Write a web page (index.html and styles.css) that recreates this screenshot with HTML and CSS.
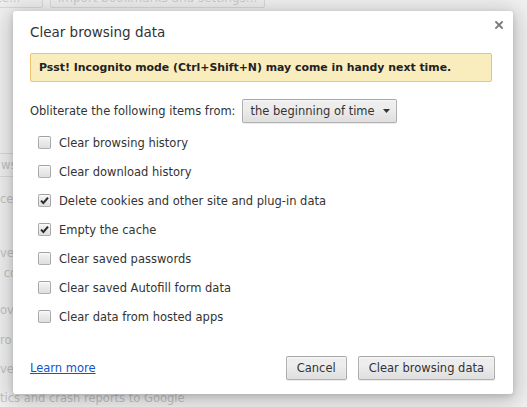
FILE: index.html
```html
<!DOCTYPE html>
<html>
<head>
<meta charset="utf-8">
<link rel="stylesheet" href="styles.css">
</head>
<body>
<div class="page">
  <div class="bg">
    <div class="bg-buttons">
      <span class="bg-btn bg-btn-a">Delete...</span>
      <span class="bg-btn bg-btn-b">Import bookmarks and settings...</span>
    </div>
    <div class="bg-box">wsi</div>
    <div class="bg-line bg-l1">ces</div>
    <div class="bg-line bg-l2">ve</div>
    <div class="bg-line bg-l3">&nbsp;co</div>
    <div class="bg-line bg-l4">ov</div>
    <div class="bg-line bg-l5">ro</div>
    <div class="bg-line bg-l6">ve</div>
    <div class="bg-line bg-l7">tics and crash reports to Google</div>
  </div>
  <div class="overlay">
    <div class="dialog">
      <svg class="close" width="8" height="8" viewBox="0 0 8 8"><path d="M1 1L7 7M7 1L1 7" stroke="#7a7a7a" stroke-width="1.9" stroke-linecap="square"/></svg>
      <h1 class="title">Clear browsing data</h1>
      <div class="banner">Psst! Incognito mode (Ctrl+Shift+N) may come in handy next time.</div>
      <div class="obliterate">
        <span>Obliterate the following items from:</span>
        <span class="select"><span>the beginning of time</span><svg width="7" height="4" viewBox="0 0 7 4"><path d="M0 0H7L3.5 4Z" fill="#333"/></svg></span>
      </div>
      <div class="list">
        <div class="row"><span class="cb"></span><span>Clear browsing history</span></div>
        <div class="row"><span class="cb"></span><span>Clear download history</span></div>
        <div class="row"><span class="cb"><svg width="11" height="11" viewBox="0 0 11 11"><path d="M2 5.6L4.4 8L9 2.6" fill="none" stroke="#2b2b2b" stroke-width="2"/></svg></span><span>Delete cookies and other site and plug-in data</span></div>
        <div class="row"><span class="cb"><svg width="11" height="11" viewBox="0 0 11 11"><path d="M2 5.6L4.4 8L9 2.6" fill="none" stroke="#2b2b2b" stroke-width="2"/></svg></span><span>Empty the cache</span></div>
        <div class="row"><span class="cb"></span><span>Clear saved passwords</span></div>
        <div class="row"><span class="cb"></span><span>Clear saved Autofill form data</span></div>
        <div class="row"><span class="cb"></span><span>Clear data from hosted apps</span></div>
      </div>
      <div class="footer">
        <a class="learn" href="#">Learn more</a>
        <span class="spacer"></span>
        <span class="btn">Cancel</span>
        <span class="btn">Clear browsing data</span>
      </div>
    </div>
  </div>
</div>
</body>
</html>
```

FILE: styles.css
```css
html, body {
  margin: 0;
  padding: 0;
}
body {
  width: 527px;
  height: 407px;
  overflow: hidden;
  background: #f2f2f2;
  font-family: "DejaVu Sans", sans-serif;
  font-size: 11.5px;
}
.page {
  position: relative;
  width: 527px;
  height: 407px;
  overflow: hidden;
}
.bg {
  display: flex;
  flex-direction: column;
  color: #c4c4c4;
}
.bg-buttons {
  display: flex;
  gap: 7px;
  margin-top: -12px;
  margin-left: -53px;
}
.bg-btn {
  height: 20px;
  box-sizing: border-box;
  border: 1px solid #dadada;
  border-radius: 2px;
  background: #f0f0f0;
  display: flex;
  align-items: center;
  justify-content: center;
  padding: 0 6px;
  font-size: 12px;
  white-space: nowrap;
  overflow: hidden;
  color: #cdcdcd;
}
.bg-btn-a { width: 96px; }
.bg-btn-b { width: 215px; }
.bg-box {
  margin-top: 145px;
  margin-left: -30px;
  width: 60px;
  height: 24px;
  box-sizing: border-box;
  border: 1px solid #dcdcdc;
  border-radius: 2px;
  padding-left: 30px;
  display: flex;
  align-items: center;
}
.bg-line {
  height: 16px;
  line-height: 16px;
}
.bg-l1 { margin-top: 14px; }
.bg-l2 { margin-top: 38px; }
.bg-l3 { margin-top: 4px; }
.bg-l4 { margin-top: 21px; }
.bg-l5 { margin-top: 14px; }
.bg-l6 { margin-top: 13px; }
.bg-l7 { margin-top: 13px; }

.overlay {
  position: absolute;
  inset: 0;
  padding: 11px 0 0 13px;
}
.dialog {
  position: relative;
  width: 500px;
  height: 383px;
  box-sizing: border-box;
  background: #fff;
  border-radius: 3px;
  box-shadow: 0 4px 23px 5px rgba(0, 0, 0, 0.2), 0 2px 6px rgba(0, 0, 0, 0.15);
  padding: 12px 18px 14px 17px;
  display: flex;
  flex-direction: column;
  color: #333;
}
.close {
  position: absolute;
  top: 10px;
  right: 10px;
}
.title {
  margin: 0;
  font-size: 13.5px;
  line-height: 18px;
  font-weight: normal;
  color: #333;
}
.banner {
  margin-top: 12px;
  margin-right: 3px;
  height: 29px;
  box-sizing: border-box;
  background: #f9edbe;
  border: 1px solid #f0c36d;
  border-radius: 2px;
  padding: 0 8px;
  display: flex;
  align-items: center;
  font-weight: bold;
  font-size: 10.9px;
  color: #222;
}
.obliterate {
  margin-top: 17px;
  height: 24px;
  display: flex;
  align-items: center;
  gap: 6px;
}
.select {
  height: 24px;
  box-sizing: border-box;
  border: 1px solid rgba(0, 0, 0, 0.25);
  border-radius: 2px;
  background: linear-gradient(#ededed, #ededed 38%, #dedede);
  box-shadow: 0 1px 0 rgba(0, 0, 0, 0.08), inset 0 1px 2px rgba(255, 255, 255, 0.75);
  padding: 0 6px 0 8px;
  display: flex;
  align-items: center;
  gap: 8px;
  color: #333;
}
.list {
  margin-top: 5px;
  display: flex;
  flex-direction: column;
}
.row {
  height: 29px;
  display: flex;
  align-items: center;
  gap: 8px;
  padding-left: 8px;
}
.cb {
  width: 13px;
  height: 13px;
  box-sizing: border-box;
  border: 1px solid rgba(0, 0, 0, 0.28);
  border-radius: 2px;
  background: linear-gradient(#f4f4f4, #dedede);
  box-shadow: inset 0 1px 2px rgba(255, 255, 255, 0.75);
  display: flex;
  align-items: center;
  justify-content: center;
}
.footer {
  margin-top: auto;
  height: 24px;
  display: flex;
  align-items: center;
  gap: 11px;
}
.learn {
  color: #15c;
  text-decoration: underline;
}
.spacer {
  flex: 1;
}
.btn {
  height: 24px;
  box-sizing: border-box;
  border: 1px solid rgba(0, 0, 0, 0.25);
  border-radius: 2px;
  background: linear-gradient(#ededed, #ededed 38%, #dedede);
  box-shadow: 0 1px 0 rgba(0, 0, 0, 0.08), inset 0 1px 2px rgba(255, 255, 255, 0.75);
  padding: 0 10px;
  display: flex;
  align-items: center;
  color: #333;
}
```
